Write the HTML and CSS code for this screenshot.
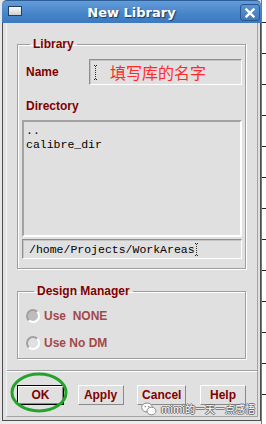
FILE: index.html
```html
<!DOCTYPE html>
<html lang="en">
<head>
  <meta charset="UTF-8">
  <title>New Library</title>
  <link rel="stylesheet" href="styles.css">
</head>
<body>
  <div class="edge"></div>

  <div class="window">
    <div class="titlebar">
      <span class="win-icon"></span>
      <span class="title">New Library</span>
      <span class="close">
        <svg width="10" height="10" viewBox="0 0 10 10">
          <path d="M1.5 1.5 L8.5 8.5 M8.5 1.5 L1.5 8.5" stroke="#fff" stroke-width="2.4" stroke-linecap="square"/>
        </svg>
      </span>
    </div>

    <div class="frame">
      <div class="panel">
        <div class="content">
          <fieldset class="group lib">
            <legend>Library</legend>
            <div class="name-row">
              <span class="label">Name</span>
              <div class="entry name-entry">
                <span class="ibeam"></span>
                <span class="hint">填写库的名字</span>
              </div>
            </div>
            <div class="label dir-label">Directory</div>
            <div class="listbox">
              <div>..</div>
              <div>calibre_dir</div>
            </div>
            <div class="entry path-entry">/home/Projects/WorkAreas<span class="ibeam small"></span></div>
          </fieldset>

          <fieldset class="group dm">
            <legend>Design Manager</legend>
            <div class="radio on"><span class="dot"></span><span class="disabled">Use&nbsp; NONE</span></div>
            <div class="radio"><span class="dot"></span><span class="disabled">Use No DM</span></div>
          </fieldset>
        </div>

        <div class="buttons">
          <div class="default-wrap">
            <button class="btn default">OK</button>
            <svg class="ring" width="58" height="41" viewBox="0 0 58 41">
              <ellipse cx="29" cy="20.5" rx="27" ry="18.5" fill="none" stroke="#23a32a" stroke-width="3"/>
            </svg>
          </div>
          <button class="btn">Apply</button>
          <button class="btn">Cancel</button>
          <button class="btn">Help</button>
        </div>
      </div>
    </div>

    <div class="watermark">
      <svg width="16" height="14" viewBox="0 0 16 14">
        <ellipse cx="6" cy="5.5" rx="5.3" ry="4.5" fill="#fff" stroke="#8a8a8a" stroke-width="1"/>
        <ellipse cx="10.5" cy="9" rx="4.5" ry="3.8" fill="#fff" stroke="#8a8a8a" stroke-width="1"/>
        <circle cx="4.3" cy="4.6" r="0.8" fill="#8a8a8a"/>
        <circle cx="7.7" cy="4.6" r="0.8" fill="#8a8a8a"/>
      </svg>
      <span>mimi的一天一点感悟</span>
    </div>
  </div>

  <div class="backdrop"></div>
</body>
</html>
```

FILE: styles.css
```css
body {
  margin: 0;
  width: 266px;
  height: 424px;
  overflow: hidden;
  display: flex;
  background: #ececec;
  font-family: "Liberation Sans", Arial, sans-serif;
}
.edge {
  width: 2px;
  background: #e6e6e6;
}
.backdrop {
  width: 4px;
  height: 424px;
  background:
    repeating-linear-gradient(180deg, transparent 0 22px, #222 22px 23px, transparent 23px 31px),
    #fff;
  border-left: 1px solid #777;
}

/* window */
.window {
  position: relative;
  width: 259px;
  height: 421px;
  display: flex;
  flex-direction: column;
  background: #e0e0e0;
}
.titlebar {
  height: 23px;
  display: flex;
  align-items: center;
  position: relative;
  border-radius: 5px 5px 0 0;
  background: linear-gradient(#639cda, #4783c8 60%, #3e79be);
  border-top: 1px solid #2d5f99;
  box-sizing: border-box;
}
.win-icon {
  position: absolute;
  left: 6px;
  top: 5px;
  width: 12px;
  height: 8px;
  border: 1px solid #233e63;
  background: linear-gradient(#fafafa, #cfcfcf);
}
.title {
  flex: 1;
  text-align: center;
  color: #fff;
  font-family: "DejaVu Sans", sans-serif;
  font-weight: bold;
  font-size: 13px;
  text-shadow: 1px 1px 1px #1d3a60;
  padding-top: 1px;
}
.close {
  position: absolute;
  right: 1px;
  top: 3px;
  width: 18px;
  height: 15px;
  border: 1px solid #2a568c;
  border-radius: 3px;
  background: linear-gradient(#5b95d5, #4178bb);
  display: flex;
  align-items: center;
  justify-content: center;
}

.frame {
  flex: 1;
  display: flex;
  border-left: 1px solid #4e4e4e;
  border-right: 1px solid #4e4e4e;
  border-bottom: 1px solid #4e4e4e;
  padding: 0 3px 3px 3px;
}
.panel {
  flex: 1;
  display: flex;
  flex-direction: column;
  border-right: 1px solid #a4a4a4;
  border-bottom: 1px solid #a4a4a4;
  border-left: 1px solid #f4f4f4;
}
.content {
  padding: 14px 11px 0 10px;
}

/* group boxes */
.group {
  margin: 0;
  min-width: 0;
  border: 1px solid #9e9e9e;
  box-shadow: inset 1px 1px 0 #fff, 1px 1px 0 #fff;
}
.group legend {
  padding: 0 3px;
  margin-left: 8px;
  font-weight: bold;
  font-size: 12px;
  line-height: 14px;
  color: #800000;
}
.lib {
  padding: 8px 3px 9px 4px;
}
.dm {
  margin-top: 15px;
  padding: 11px 3px 8px 8px;
}
.label {
  font-weight: bold;
  font-size: 12px;
  line-height: 14px;
  color: #800000;
}

.name-row {
  display: flex;
  align-items: center;
  height: 26px;
}
.name-row .label {
  margin-left: 4px;
}
.entry {
  box-sizing: border-box;
  background: #e0e0e0;
  border: 1px solid;
  border-color: #8e8e8e #fff #fff #8e8e8e;
  box-shadow: inset 1px 1px 0 #c4c4c4;
}
.name-entry {
  margin-left: auto;
  width: 153px;
  height: 26px;
  display: flex;
  align-items: center;
  padding-left: 4px;
}
.ibeam {
  display: inline-block;
  width: 3px;
  height: 15px;
  border-top: 1px dotted #222;
  border-bottom: 1px dotted #222;
  background: repeating-linear-gradient(180deg, #333 0 1px, transparent 1px 2px) 1px 0 / 1px 100% no-repeat;
  box-sizing: border-box;
}
.ibeam.small {
  height: 13px;
  vertical-align: -3px;
}
.hint {
  margin-left: 13px;
  color: #ff2b2b;
  font-family: "Noto Sans CJK SC", sans-serif;
  font-size: 16px;
  line-height: 20px;
}
.dir-label {
  margin: 14px 0 0 4px;
}
.listbox {
  margin-top: 7px;
  width: 220px;
  height: 117px;
  box-sizing: border-box;
  border: 2px solid;
  border-color: #a2a2a2 #fff #fff #a2a2a2;
  padding: 2px;
  font-family: "Liberation Mono", monospace;
  font-size: 11.5px;
  line-height: 14px;
  color: #000;
}
.path-entry {
  margin-top: 2px;
  width: 220px;
  height: 20px;
  padding: 2px 0 0 6px;
  font-family: "Liberation Mono", monospace;
  font-size: 11.5px;
  line-height: 16px;
  color: #000;
}

/* radios */
.radio {
  display: flex;
  align-items: center;
  height: 14px;
  margin-bottom: 13px;
}
.radio:last-child {
  margin-bottom: 0;
}
.dot {
  width: 14px;
  height: 14px;
  box-sizing: border-box;
  border-radius: 50%;
  border: 2px solid;
  border-color: #a0a0a0 #fff #fff #a0a0a0;
  margin-right: 4px;
}
.radio.on .dot {
  background: #bdbdbd;
}
.disabled {
  font-weight: bold;
  font-size: 12px;
  line-height: 14px;
  color: #a34848;
}

/* buttons */
.buttons {
  flex: 1;
  margin-top: 11px;
  border-top: 1px solid #a0a0a0;
  box-shadow: inset 0 1px 0 #fff;
  display: flex;
  align-items: flex-start;
  justify-content: space-between;
  padding: 14px 11px 0 10px;
}
.btn {
  height: 20px;
  min-width: 46px;
  padding: 0 4px;
  background: #e0e0e0;
  border: 1px solid;
  border-color: #fff #8a8a8a #8a8a8a #fff;
  font-family: "Liberation Sans", Arial, sans-serif;
  font-weight: bold;
  font-size: 12px;
  color: #800000;
}
.default-wrap {
  position: relative;
  width: 47px;
  height: 20px;
}
.btn.default {
  width: 47px;
  outline: 1px solid #000;
  outline-offset: -1px;
  box-shadow: inset 1px 1px 0 #fff, inset -1px -1px 0 #8a8a8a;
}
.ring {
  position: absolute;
  left: -7px;
  top: -13px;
}

.watermark {
  position: absolute;
  left: 139px;
  top: 402px;
  display: flex;
  align-items: center;
  gap: 4px;
  white-space: nowrap;
  color: #fff;
  font-family: "Noto Sans CJK SC", sans-serif;
  font-size: 10px;
  line-height: 14px;
  text-shadow: 1px 0 0 #6a6a6a, -1px 0 0 #6a6a6a, 0 1px 0 #6a6a6a, 0 -1px 0 #6a6a6a;
}
```
